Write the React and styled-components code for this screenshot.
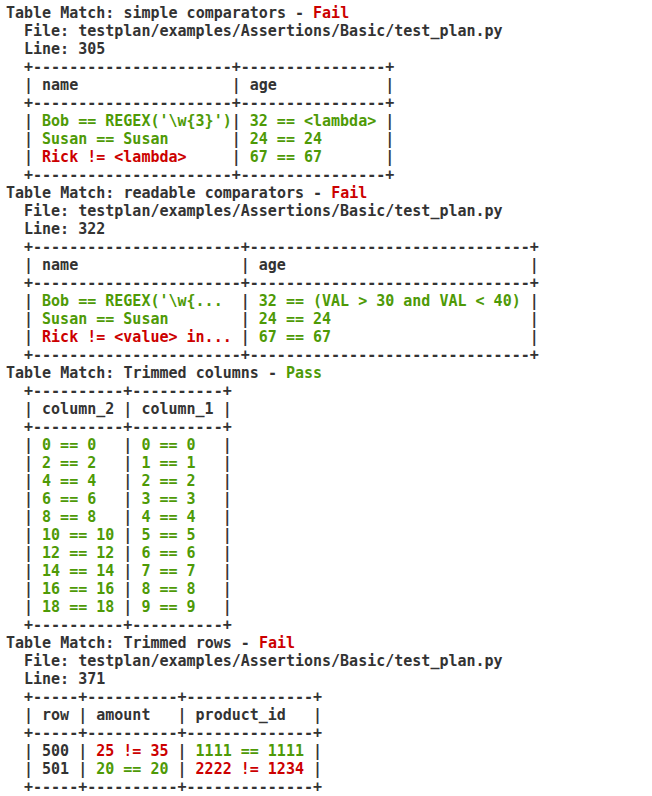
import React from 'react';
import styled, { createGlobalStyle } from 'styled-components';

const GlobalStyle = createGlobalStyle`
    html, body {
        margin: 0;
        padding: 0;
        background: #ffffff;
    }
`

const colors = {
    text: '#333333',
    pass: '#4e9a06',
    fail: '#cc0000',
}

const Log = styled.div`
    font-family: 'DejaVu Sans Mono', 'Liberation Mono', monospace;
    font-weight: 700;
    font-size: 15px;
    line-height: 18px;
    color: ${colors.text};
    padding: 4px 6px;
    white-space: pre;
`

const Line = styled.div`
    height: 18px;
    padding-left: ${props => props.indent ? '18px' : '0'};
`

const Status = styled.span`
    color: ${props => props.pass ? colors.pass : colors.fail};
`

const Cell = styled.span`
    color: ${props => props.status === 'pass' ? colors.pass : props.status === 'fail' ? colors.fail : colors.text};
`

const Block = styled.section`
    display: flex;
    flex-direction: column;
`

const assertions = [
    {
        title: 'simple comparators',
        pass: false,
        line: 305,
        widths: [22, 16],
        header: ['name', 'age'],
        rows: [
            [["Bob == REGEX('\\w{3}')", 'pass'], ['32 == <lambda>', 'pass']],
            [['Susan == Susan', 'pass'], ['24 == 24', 'pass']],
            [['Rick != <lambda>', 'fail'], ['67 == 67', 'pass']],
        ],
    },
    {
        title: 'readable comparators',
        pass: false,
        line: 322,
        widths: [23, 31],
        header: ['name', 'age'],
        rows: [
            [["Bob == REGEX('\\w{...", 'pass'], ['32 == (VAL > 30 and VAL < 40)', 'pass']],
            [['Susan == Susan', 'pass'], ['24 == 24', 'pass']],
            [['Rick != <value> in...', 'fail'], ['67 == 67', 'pass']],
        ],
    },
    {
        title: 'Trimmed columns',
        pass: true,
        widths: [10, 10],
        header: ['column_2', 'column_1'],
        rows: Array.from({ length: 10 }, (_, i) => [
            [`${i * 2} == ${i * 2}`, 'pass'],
            [`${i} == ${i}`, 'pass'],
        ]),
    },
    {
        title: 'Trimmed rows',
        pass: false,
        line: 371,
        widths: [5, 10, 14],
        header: ['row', 'amount', 'product_id'],
        rows: [
            [['500', null], ['25 != 35', 'fail'], ['1111 == 1111', 'pass']],
            [['501', null], ['20 == 20', 'pass'], ['2222 != 1234', 'fail']],
        ],
    },
]

const border = widths => '+' + widths.map(w => '-'.repeat(w)).join('+') + '+'
const pad = (text, w) => (' ' + text).padEnd(w, ' ')

function TableRow({ widths, cells }) {
    return (
        <Line indent>
            |
            {cells.map(([text, status], i) => (
                <React.Fragment key={i}>
                    <Cell status={status}>{pad(text, widths[i])}</Cell>|
                </React.Fragment>
            ))}
        </Line>
    )
}

function Assertion({ data }) {
    return (
        <Block>
            <Line>Table Match: {data.title} - <Status pass={data.pass}>{data.pass ? 'Pass' : 'Fail'}</Status></Line>
            {data.line && <Line indent>File: testplan/examples/Assertions/Basic/test_plan.py</Line>}
            {data.line && <Line indent>Line: {data.line}</Line>}
            <Line indent>{border(data.widths)}</Line>
            <TableRow widths={data.widths} cells={data.header.map(h => [h, null])} />
            <Line indent>{border(data.widths)}</Line>
            {data.rows.map((row, i) => <TableRow key={i} widths={data.widths} cells={row} />)}
            <Line indent>{border(data.widths)}</Line>
        </Block>
    )
}

export default function App() {
    return (
        <>
            <GlobalStyle />
            <Log>
                {assertions.map((a, i) => <Assertion key={i} data={a} />)}
            </Log>
        </>
    )
}
